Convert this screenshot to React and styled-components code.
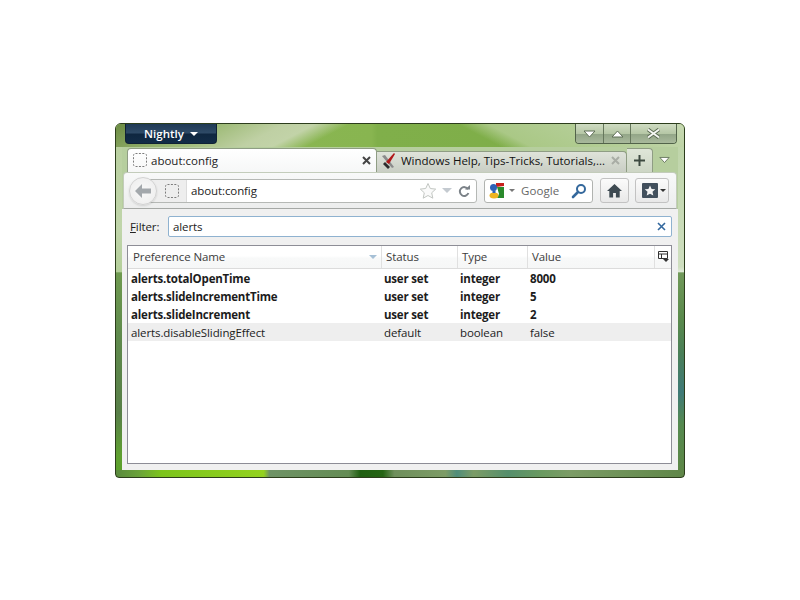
import React from 'react';
import styled, { createGlobalStyle } from 'styled-components';

const Global = createGlobalStyle`
  html, body { margin: 0; padding: 0; background: #fff; }
  body { font-family: "Open Sans", "Noto Sans", sans-serif; font-size: 11.5px; letter-spacing: -0.1px; color: #222; }
`;

const Stage = styled.div`
  width: 800px;
  height: 600px;
  padding: 123px 115px 0;
  box-sizing: border-box;
`;

const Window = styled.div`
  width: 570px;
  height: 355px;
  box-sizing: border-box;
  border: 1px solid #2c3d1c;
  border-radius: 6px 6px 4px 4px;
  padding: 0 6px 7px;
  display: flex;
  flex-direction: column;
  overflow: hidden;
  background:
    linear-gradient(90deg, #5a8a3e 0, #6aa23a 4%, #7cc41c 8%, #93d21f 26%, #6f9366 27%, #648c54 41%, #205f12 43%, #256414 47%, #6f8f5c 49%, #7d9c66 58%, #4f8d7a 60%, #7c9c66 63%, #558f6c 69%, #6a9a60 75%, #7c9c66 80%, #5f8648 100%) bottom / 100% 7px no-repeat,
    linear-gradient(180deg, #bcd3a6 0, #cfdfc0 40.500%, #e2ebdb 42%, #71995a 42.100%, #5a8a4c 55%, #4a7f58 65%, #3f7a78 76%, #55894f 85%, #5e8746 100%) right / 6px 100% no-repeat,
    linear-gradient(180deg, #b8cf9e 0, #c0d5aa 30%, #b4cf9a 42%, #6f9a50 42.100%, #5f8a4c 60%, #587f48 82%, #5fa030 94%, #5aa028 100%) left / 6px 100% no-repeat,
    #b6ce9e;
`;

const TopGlass = styled.div`
  margin: 0 -6px;
  padding: 0 5px 0 9px;
  height: 23px;
  display: flex;
  justify-content: space-between;
  align-items: flex-start;
  background:
    linear-gradient(152.5deg, #6c8c43 0, #a0bc7a 50px, #bfd0a4 78px, #c2d3a8 92px, rgba(194,211,168,0) 108px),
    linear-gradient(27.5deg, rgba(170,200,134,0) 178px, #aac886 192px, #b6cf9a 240px, #c8d9b4 284px),
    linear-gradient(90deg, #8cb754 0, #88b550 45%, #80af4a 46%, #7dad47 100%);
`;

const MenuButton = styled.button`
  width: 92px;
  height: 20px;
  border: 1px solid #0f2235;
  border-top: 0;
  border-radius: 0 0 4px 4px;
  padding: 0;
  color: #fff;
  font: 600 11.5px "Open Sans", sans-serif;
  background: linear-gradient(180deg, #1f3a55 0, #2e4a66 45%, #0f2740 55%, #122c47 100%);
  display: flex;
  align-items: center;
  justify-content: center;
  gap: 6px;
`;

const Caret = styled.span`
  width: 0;
  height: 0;
  flex: none;
  border-left: ${p => p.$s || 4}px solid transparent;
  border-right: ${p => p.$s || 4}px solid transparent;
  border-top: ${p => p.$s || 4}px solid ${p => p.$color || '#fff'};
`;

const Controls = styled.div`
  display: flex;
  height: 19px;
  border: 1px solid #52634a;
  border-top: 0;
  border-radius: 0 0 4px 4px;
  overflow: hidden;
  margin-right: 2px;
`;

const CtlBtn = styled.div`
  width: ${p => p.$w}px;
  height: 100%;
  display: flex;
  align-items: center;
  justify-content: center;
  background: linear-gradient(180deg, #cfdcc2 0, #b6c7a6 50%, #93a688 55%, #a9b99c 100%);
  & + & { border-left: 1px solid #66775c; }
`;

const TabRow = styled.div`
  display: flex;
  height: 24px;
  margin: 1px 0 0 5px;
  align-items: flex-end;
  position: relative;
  z-index: 1;
`;

const ActiveTab = styled.div`
  width: 250px;
  height: 24px;
  box-sizing: border-box;
  background: linear-gradient(180deg, #fff 0, #f6f7f7 100%);
  border: 1px solid #8f9d84;
  border-bottom: 0;
  border-radius: 4px 4px 0 0;
  display: flex;
  align-items: center;
  padding: 0 5px 1px 4px;
  gap: 3px;
  color: #222;
`;

const BackTab = styled.div`
  width: 250px;
  height: 21px;
  box-sizing: border-box;
  background: linear-gradient(180deg, #dfe3da 0, #c9cec4 100%);
  border: 1px solid #8f9d84;
  border-left: 0;
  border-bottom: 0;
  border-radius: 0 4px 0 0;
  display: flex;
  align-items: center;
  padding: 0 6px 3px 3px;
  gap: 3px;
  color: #111;
`;

const TabTitle = styled.span`
  flex: 1;
  white-space: nowrap;
  letter-spacing: 0;
`;

const NewTab = styled.div`
  width: 26px;
  height: 24px;
  box-sizing: border-box;
  border: 1px solid #8f9d84;
  border-left: 0;
  border-bottom: 0;
  border-radius: 0 4px 0 0;
  background: linear-gradient(180deg, #dfe6d8 0, #cdd6c5 100%);
  display: flex;
  align-items: center;
  justify-content: center;
`;

const ListTabs = styled.div`
  width: 22px;
  height: 24px;
  display: flex;
  align-items: center;
  justify-content: center;
`;

const Toolbar = styled.div`
  margin: 0 1px;
  height: 37px;
  box-sizing: border-box;
  background: linear-gradient(180deg, #f8f9f9 0, #eceded 100%);
  border: 1px solid #c3ccbb;
  border-bottom: 1px solid #a5a8a5;
  border-radius: 4px 4px 0 0;
  display: flex;
  align-items: center;
  padding-left: 5px;
`;

const BackCircle = styled.div`
  width: 28px;
  height: 28px;
  box-sizing: border-box;
  border-radius: 50%;
  background: radial-gradient(circle, #f9f9f9 0, #ececec 100%);
  border: 1px solid #d2d2d2;
  box-shadow: 0 1px 2px rgba(0,0,0,.12);
  display: flex;
  align-items: center;
  justify-content: center;
  position: relative;
  z-index: 1;
`;

const UrlBar = styled.div`
  width: 329px;
  height: 24px;
  box-sizing: border-box;
  margin-left: -9px;
  border: 1px solid #b5b8b5;
  border-radius: 0 3px 3px 0;
  background: #fff;
  display: flex;
  align-items: center;
  padding-right: 5px;
`;

const Identity = styled.div`
  width: 38px;
  height: 100%;
  box-sizing: border-box;
  background: #eeeeee;
  border-right: 1px solid #dcdcdc;
  display: flex;
  align-items: center;
  justify-content: flex-end;
  padding-right: 6px;
  margin-right: 4px;
`;

const UrlText = styled.span`
  flex: 1;
  padding-bottom: 1px;
`;

const UrlIcons = styled.div`
  display: flex;
  align-items: center;
  gap: 5px;
`;

const SearchBar = styled.div`
  width: 109px;
  height: 24px;
  box-sizing: border-box;
  margin-left: 7px;
  border: 1px solid #b0b3b0;
  border-radius: 3px;
  background: #fff;
  display: flex;
  align-items: center;
  padding: 0 5px 0 3px;
  color: #666;
  gap: 3px;
`;

const SearchText = styled.span`
  flex: 1;
  margin-left: 3px;
  letter-spacing: 0.1px;
  padding-bottom: 1px;
`;

const ToolBtn = styled.div`
  width: ${p => p.$w}px;
  height: 25px;
  box-sizing: border-box;
  margin-left: ${p => p.$ml}px;
  padding-left: ${p => p.$pl || 0}px;
  border: 1px solid #c2c2c2;
  border-radius: 3px;
  background: linear-gradient(180deg, #fbfbfb 0, #e8e8e8 100%);
  display: flex;
  align-items: center;
  justify-content: center;
  gap: 2px;
`;

const Content = styled.div`
  flex: 1;
  background: #f0f0f0;
  display: flex;
  flex-direction: column;
  padding: 7px 6px 6px 5px;
  min-height: 0;
`;

const FilterRow = styled.div`
  display: flex;
  align-items: center;
  height: 21px;
  margin-bottom: 8px;
`;

const FilterLabel = styled.label`
  width: 41px;
  padding-left: 3px;
  box-sizing: border-box;
  & u { text-decoration: underline; }
`;

const FilterBox = styled.div`
  flex: 1;
  height: 21px;
  box-sizing: border-box;
  border: 1px solid #8fb2d0;
  border-radius: 2px;
  background: #fff;
  display: flex;
  align-items: center;
  justify-content: space-between;
  padding: 0 5px 0 4px;
`;

const Tree = styled.div`
  flex: 1;
  border: 1px solid #8d8d96;
  background: #fff;
  min-height: 0;
`;

const columns = '253px 76px 70px 127px 1fr';

const HeadRow = styled.div`
  display: grid;
  grid-template-columns: ${columns};
  height: 22px;
  border-bottom: 1px solid #dcdcdc;
  background: linear-gradient(180deg, #fff 0, #fff 45%, #f8f9f9 55%, #f6f7f7 100%);
`;

const HeadCell = styled.div`
  display: flex;
  align-items: center;
  justify-content: space-between;
  padding: 0 4px 1px 4px;
  color: #3c3c3c;
  &:first-child { padding-left: 5px; }
  &:last-child { padding-left: 3px; }
  & + & { border-left: 1px solid #e0e0e0; }
`;

const Row = styled.div`
  display: grid;
  grid-template-columns: ${columns};
  height: 18px;
  align-items: center;
  background: ${p => (p.$alt ? '#eeeeee' : 'transparent')};
  font-weight: ${p => (p.$bold ? 700 : 400)};
  letter-spacing: ${p => (p.$bold ? '-0.2px' : '-0.1px')};
  color: #1c1c1c;
`;

const Cell = styled.div`
  padding-left: 3px;
  white-space: nowrap;
`;

const PageIcon = () => (
  <svg width="16" height="16" viewBox="0 0 16 16" style={{ flex: 'none' }}>
    <rect x="1.5" y="1.5" width="13" height="13" rx="2" fill="none" stroke="#7c7c7c" strokeDasharray="2 1.4" />
  </svg>
);

const Tools = () => (
  <svg width="18" height="18" viewBox="0 0 18 18" style={{ flex: 'none' }}>
    <path d="M2 4l3-1 9 12-2 1z" fill="#8a8a8a" />
    <path d="M6 10l8-9 1 1-6 10z" fill="#b01818" />
    <path d="M5 10l5 5-2 2-5-5z" fill="#2c2c2c" />
  </svg>
);

const Star = ({ size = 18, fill = '#fafafa', stroke = '#c2c6c2' }) => (
  <svg width={size} height={size} viewBox="0 0 18 18">
    <path d="M9 1.5l2.3 5 5.4.6-4 3.7 1.1 5.4L9 13.5l-4.8 2.7 1.1-5.4-4-3.700 5.4-.6z" fill={fill} stroke={stroke} />
  </svg>
);

const Reload = () => (
  <svg width="14" height="14" viewBox="0 0 14 14">
    <path d="M11 5.2A4.4 4.4 0 1 0 11.4 9" fill="none" stroke="#7b8288" strokeWidth="2" />
    <path d="M8 5.5h5V1z" fill="#7b8288" />
  </svg>
);

const GoogleIcon = () => (
  <svg width="18" height="18" viewBox="0 0 18 18" style={{ flex: 'none' }}>
    <path d="M8 1h8v3l-8 1z" fill="#c8201c" />
    <path d="M9 5h7v11H9l2-4z" fill="#2a8a2c" />
    <circle cx="5.5" cy="5.5" r="3.5" fill="#2e62b8" />
    <ellipse cx="6" cy="13.5" rx="4.5" ry="3" fill="#eeb420" />
    <rect x="4.5" y="8.5" width="3" height="2.5" fill="#2e62b8" />
  </svg>
);

const Magnifier = () => (
  <svg width="16" height="16" viewBox="0 0 16 16">
    <circle cx="10" cy="6" r="4" fill="none" stroke="#34689c" strokeWidth="2" />
    <path d="M7 9l-5 5" stroke="#34689c" strokeWidth="2.6" strokeLinecap="round" />
  </svg>
);

const Home = () => (
  <svg width="17" height="15" viewBox="0 0 17 15">
    <path d="M8.5 1L1 8h2.3v6.5h3.8V10h2.8v4.5h3.800V8H16z" fill="#3e4a52" />
  </svg>
);

const Bookmarks = () => (
  <svg width="16" height="15" viewBox="0 0 16 15">
    <rect x="0" y="0" width="16" height="15" rx="1" fill="#414f5c" />
    <path d="M8 2.5l1.6 3.4 3.7.4-2.8 2.5.8 3.7L8 10.7l-3.3 1.8.8-3.700-2.8-2.5 3.7-.4z" fill="#f4f4f4" />
  </svg>
);

const Close = ({ color, size = 9, w = 2 }) => (
  <svg width={size} height={size} viewBox="0 0 9 9" style={{ flex: 'none' }}>
    <path d="M1 1l7 7M8 1L1 8" stroke={color} strokeWidth={w} />
  </svg>
);

const Hollow = ({ up, w = 13 }) => (
  <svg width={w} height="8" viewBox="0 0 13 8">
    <path d={up ? 'M6.5 1L12 7H1z' : 'M1 1h11L6.5 7z'} fill="#fff" stroke="#5f6e56" />
  </svg>
);

const ColPicker = () => (
  <svg width="11" height="11" viewBox="0 0 11 11">
    <path d="M.5.5h9v7h-9zM.5 3h9M3.5 3v4.500" fill="none" stroke="#333" />
    <path d="M5 8h6L8 11z" fill="#333" />
  </svg>
);

export default function App() {
  return (
    <Stage>
      <Global />
      <Window>
        <TopGlass>
          <MenuButton>Nightly <Caret /></MenuButton>
          <Controls>
            <CtlBtn $w={27}><Hollow /></CtlBtn>
            <CtlBtn $w={26}><Hollow up /></CtlBtn>
            <CtlBtn $w={45}>
              <svg width="15" height="11" viewBox="0 0 15 11">
                <path d="M2 1.500l11 8M13 1.500l-11 8" stroke="#5b6b53" strokeWidth="3.800" />
                <path d="M2 1.500l11 8M13 1.500l-11 8" stroke="#f4f6f2" strokeWidth="2" />
              </svg>
            </CtlBtn>
          </Controls>
        </TopGlass>
        <TabRow>
          <ActiveTab>
            <PageIcon />
            <TabTitle>about:config</TabTitle>
            <Close color="#444" />
          </ActiveTab>
          <BackTab>
            <Tools />
            <TabTitle>Windows Help, Tips-Tricks, Tutorials,...</TabTitle>
            <Close color="#a9adA5" />
          </BackTab>
          <NewTab>
            <svg width="13" height="13" viewBox="0 0 13 13">
              <path d="M6.500 1v11M1 6.500h11" stroke="#3d4a40" strokeWidth="2" />
            </svg>
          </NewTab>
          <ListTabs><Hollow w={11} /></ListTabs>
        </TabRow>
        <Toolbar>
          <BackCircle>
            <svg width="18" height="16" viewBox="0 0 18 16">
              <path d="M8 1L1 8l7 7V10.500h9v-5H8z" fill="#a3a8ac" />
            </svg>
          </BackCircle>
          <UrlBar>
            <Identity><PageIcon /></Identity>
            <UrlText>about:config</UrlText>
            <UrlIcons>
              <Star />
              <Caret $s={5} $color="#c4cad0" />
              <Reload />
            </UrlIcons>
          </UrlBar>
          <SearchBar>
            <GoogleIcon />
            <Caret $s={3} $color="#777" />
            <SearchText>Google</SearchText>
            <Magnifier />
          </SearchBar>
          <ToolBtn $w={29} $ml={7}><Home /></ToolBtn>
          <ToolBtn $w={34} $ml={6} $pl={4}>
            <Bookmarks />
            <Caret $s={3} $color="#333" />
          </ToolBtn>
        </Toolbar>
        <Content>
          <FilterRow>
            <FilterLabel><u>F</u>ilter:</FilterLabel>
            <FilterBox>
              alerts
              <Close color="#33689e" w={1.6} />
            </FilterBox>
          </FilterRow>
          <Tree>
            <HeadRow>
              <HeadCell>Preference Name <Caret $color="#a6c0d6" /></HeadCell>
              <HeadCell>Status</HeadCell>
              <HeadCell>Type</HeadCell>
              <HeadCell>Value</HeadCell>
              <HeadCell><ColPicker /></HeadCell>
            </HeadRow>
            <div>
              <Row $bold><Cell>alerts.totalOpenTime</Cell><Cell>user set</Cell><Cell>integer</Cell><Cell>8000</Cell></Row>
              <Row $bold><Cell>alerts.slideIncrementTime</Cell><Cell>user set</Cell><Cell>integer</Cell><Cell>5</Cell></Row>
              <Row $bold><Cell>alerts.slideIncrement</Cell><Cell>user set</Cell><Cell>integer</Cell><Cell>2</Cell></Row>
              <Row $alt><Cell>alerts.disableSlidingEffect</Cell><Cell>default</Cell><Cell>boolean</Cell><Cell>false</Cell></Row>
            </div>
          </Tree>
        </Content>
      </Window>
    </Stage>
  );
}
